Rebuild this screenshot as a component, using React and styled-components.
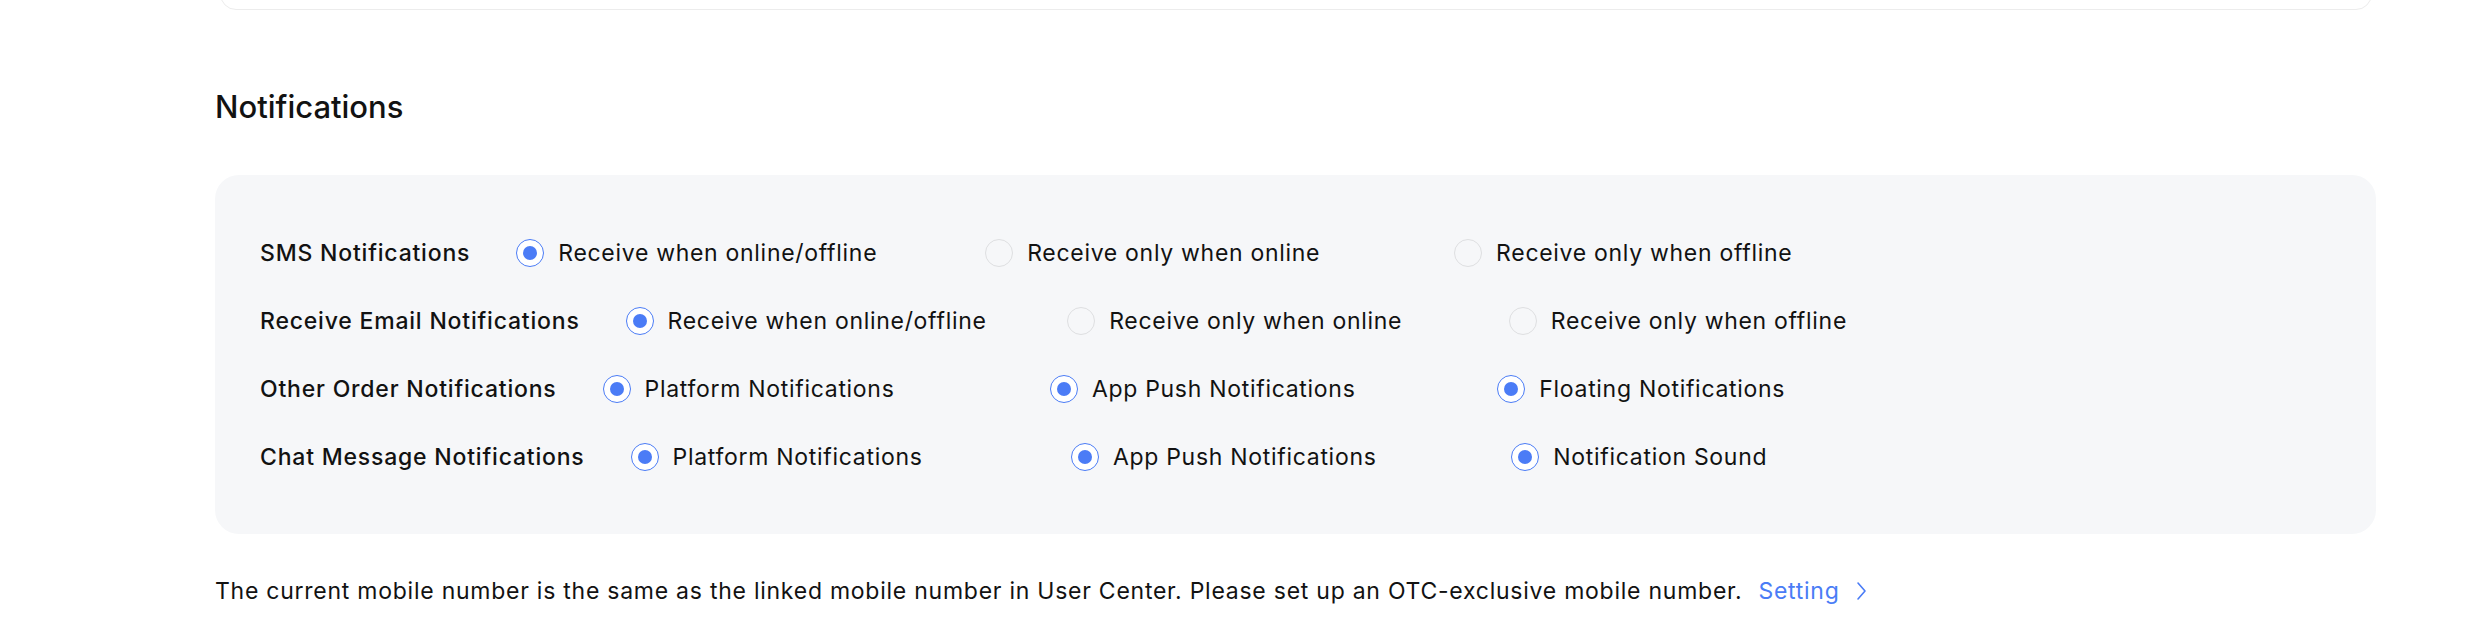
import { useState } from "react";
import styled, { createGlobalStyle } from "styled-components";

const GlobalStyle = createGlobalStyle`
  html, body {
    margin: 0;
    padding: 0;
    background: #ffffff;
    font-family: Inter, "Noto Sans", "Liberation Sans", sans-serif;
    color: #121212;
  }
`;

const Page = styled.div`
  width: 2161px;
  padding-left: 215px;
`;

const TopCard = styled.div`
  height: 48px;
  margin: -40px 4px 0 5px;
  border: 1px solid #ececec;
  border-radius: 16px;
  background: #fff;
`;

const Title = styled.h2`
  margin: 77px 0 0;
  font-size: 31px;
  line-height: 40px;
  font-weight: 500;
`;

const Panel = styled.div`
  margin-top: 48px;
  padding: 44px 0 43px 45px;
  background: #f6f7f9;
  border-radius: 24px;
`;

const Row = styled.div`
  display: flex;
  align-items: center;
  height: 68px;
`;

const Label = styled.div`
  font-size: 23px;
  font-weight: 500;
  letter-spacing: 0.8px;
  white-space: nowrap;
`;

const Group = styled.div`
  flex: 1;
  display: flex;
  margin-left: 46px;
  margin-right: -16px;
`;

const Option = styled.label`
  width: 25%;
  display: flex;
  align-items: center;
  gap: 14px;
  font-size: 23px;
  letter-spacing: 0.7px;
  white-space: nowrap;
  cursor: pointer;
`;

const Radio = styled.span`
  width: 28px;
  height: 28px;
  box-sizing: border-box;
  border-radius: 50%;
  border: 1.5px solid ${(p) => (p.$checked ? "#4b7cf6" : "#dedfe1")};
  background: ${(p) => (p.$checked ? "#fff" : "transparent")};
  display: flex;
  align-items: center;
  justify-content: center;
  flex-shrink: 0;

  &::after {
    content: "";
    width: 14px;
    height: 14px;
    border-radius: 50%;
    background: #4b7cf6;
    display: ${(p) => (p.$checked ? "block" : "none")};
  }
`;

const Footer = styled.p`
  margin: 41px 0 0;
  font-size: 23px;
  letter-spacing: 0.75px;
  line-height: 32px;
  display: flex;
  align-items: center;
  white-space: nowrap;
`;

const SettingLink = styled.a`
  margin-left: 16px;
  color: #4a7cf6;
  display: inline-flex;
  align-items: center;
  gap: 16px;
  cursor: pointer;
`;

const rows = [
  {
    label: "SMS Notifications",
    multi: false,
    options: [
      "Receive when online/offline",
      "Receive only when online",
      "Receive only when offline",
    ],
    initial: [true, false, false],
  },
  {
    label: "Receive Email Notifications",
    multi: false,
    options: [
      "Receive when online/offline",
      "Receive only when online",
      "Receive only when offline",
    ],
    initial: [true, false, false],
  },
  {
    label: "Other Order Notifications",
    multi: true,
    options: [
      "Platform Notifications",
      "App Push Notifications",
      "Floating Notifications",
    ],
    initial: [true, true, true],
  },
  {
    label: "Chat Message Notifications",
    multi: true,
    options: [
      "Platform Notifications",
      "App Push Notifications",
      "Notification Sound",
    ],
    initial: [true, true, true],
  },
];

const SettingRow = ({ row }) => {
  const [checked, setChecked] = useState(row.initial);

  const toggle = (i) => {
    if (row.multi) {
      setChecked(checked.map((c, j) => (j === i ? !c : c)));
    } else {
      setChecked(checked.map((_, j) => j === i));
    }
  };

  return (
    <Row>
      <Label>{row.label}</Label>
      <Group>
        {row.options.map((opt, i) => (
          <Option key={opt} onClick={() => toggle(i)}>
            <Radio $checked={checked[i]} />
            {opt}
          </Option>
        ))}
      </Group>
    </Row>
  );
};

const App = () => {
  return (
    <>
      <GlobalStyle />
      <Page>
        <TopCard />
        <Title>Notifications</Title>
        <Panel>
          {rows.map((row) => (
            <SettingRow key={row.label} row={row} />
          ))}
        </Panel>
        <Footer>
          The current mobile number is the same as the linked mobile number in
          User Center. Please set up an OTC-exclusive mobile number.
          <SettingLink>
            Setting
            <svg width="11" height="20" viewBox="0 0 11 20" fill="none">
              <path
                d="M2 2l7 8-7 8"
                stroke="#4a7cf6"
                strokeWidth="1.6"
                strokeLinecap="round"
                strokeLinejoin="round"
              />
            </svg>
          </SettingLink>
        </Footer>
      </Page>
    </>
  );
};

export default App;
